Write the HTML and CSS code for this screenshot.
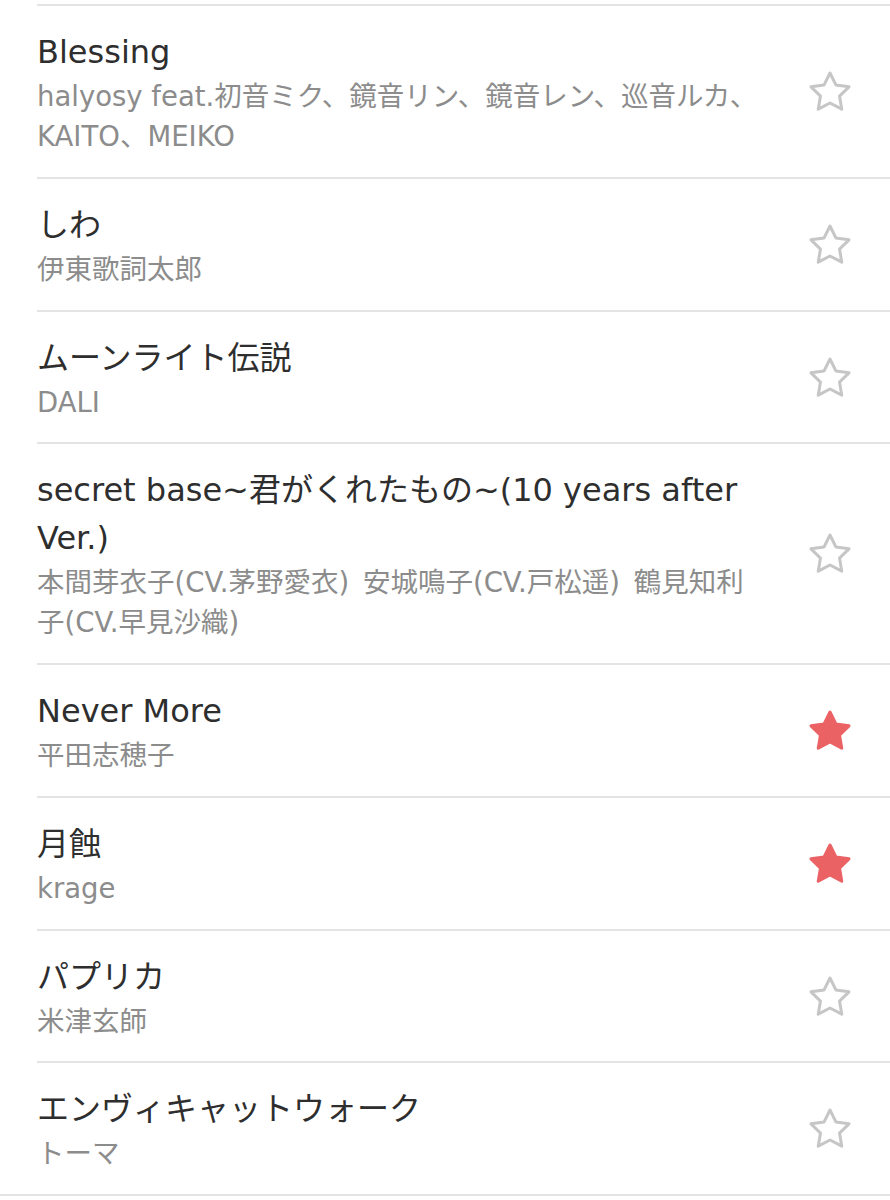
FILE: index.html
```html
<!DOCTYPE html>
<html lang="ja">
<head>
  <meta charset="UTF-8" />
  <meta name="viewport" content="width=device-width, initial-scale=1.0" />
  <title>お気に入り</title>
  <link rel="stylesheet" href="styles.css">
</head>
<body>
  <ul class="songs">
    <li class="song">
      <div class="info">
        <div class="title">Blessing</div>
        <div class="artist">halyosy feat.初音ミク、鏡音リン、鏡音レン、巡音ルカ、KAITO、MEIKO</div>
      </div>
      <div class="fav"><svg viewBox="0 0 48 48"><polygon points="24,5 29.88,16.91 43.02,18.82 33.51,28.09 35.76,41.18 24,35 12.24,41.18 14.49,28.09 4.98,18.82 18.12,16.91"/></svg></div>
    </li>
    <li class="song">
      <div class="info">
        <div class="title">しわ</div>
        <div class="artist">伊東歌詞太郎</div>
      </div>
      <div class="fav"><svg viewBox="0 0 48 48"><polygon points="24,5 29.88,16.91 43.02,18.82 33.51,28.09 35.76,41.18 24,35 12.24,41.18 14.49,28.09 4.98,18.82 18.12,16.91"/></svg></div>
    </li>
    <li class="song">
      <div class="info">
        <div class="title">ムーンライト伝説</div>
        <div class="artist">DALI</div>
      </div>
      <div class="fav"><svg viewBox="0 0 48 48"><polygon points="24,5 29.88,16.91 43.02,18.82 33.51,28.09 35.76,41.18 24,35 12.24,41.18 14.49,28.09 4.98,18.82 18.12,16.91"/></svg></div>
    </li>
    <li class="song">
      <div class="info">
        <div class="title">secret base~君がくれたもの~(10 years after Ver.)</div>
        <div class="artist">本間芽衣子(CV.茅野愛衣)&ensp;安城鳴子(CV.戸松遥)&ensp;鶴見知利子(CV.早見沙織)</div>
      </div>
      <div class="fav"><svg viewBox="0 0 48 48"><polygon points="24,5 29.88,16.91 43.02,18.82 33.51,28.09 35.76,41.18 24,35 12.24,41.18 14.49,28.09 4.98,18.82 18.12,16.91"/></svg></div>
    </li>
    <li class="song">
      <div class="info">
        <div class="title">Never More</div>
        <div class="artist">平田志穂子</div>
      </div>
      <div class="fav on"><svg viewBox="0 0 48 48"><polygon points="24,5 29.88,16.91 43.02,18.82 33.51,28.09 35.76,41.18 24,35 12.24,41.18 14.49,28.09 4.98,18.82 18.12,16.91"/></svg></div>
    </li>
    <li class="song">
      <div class="info">
        <div class="title">月蝕</div>
        <div class="artist">krage</div>
      </div>
      <div class="fav on"><svg viewBox="0 0 48 48"><polygon points="24,5 29.88,16.91 43.02,18.82 33.51,28.09 35.76,41.18 24,35 12.24,41.18 14.49,28.09 4.98,18.82 18.12,16.91"/></svg></div>
    </li>
    <li class="song">
      <div class="info">
        <div class="title">パプリカ</div>
        <div class="artist">米津玄師</div>
      </div>
      <div class="fav"><svg viewBox="0 0 48 48"><polygon points="24,5 29.88,16.91 43.02,18.82 33.51,28.09 35.76,41.18 24,35 12.24,41.18 14.49,28.09 4.98,18.82 18.12,16.91"/></svg></div>
    </li>
    <li class="song">
      <div class="info">
        <div class="title">エンヴィキャットウォーク</div>
        <div class="artist">トーマ</div>
      </div>
      <div class="fav"><svg viewBox="0 0 48 48"><polygon points="24,5 29.88,16.91 43.02,18.82 33.51,28.09 35.76,41.18 24,35 12.24,41.18 14.49,28.09 4.98,18.82 18.12,16.91"/></svg></div>
    </li>
  </ul>
</body>
</html>
```

FILE: styles.css
```css
body {
  margin: 0;
  background: #fff;
  font-family: "DejaVu Sans", "Noto Sans CJK JP", sans-serif;
}
.songs {
  list-style: none;
  margin: 4px 0 0;
  padding: 0;
  border-bottom: 2px solid #e4e4e4;
}
.song {
  display: flex;
  align-items: center;
  margin-left: 37px;
  padding: 22px 0 20.75px;
  border-top: 2px solid #e4e4e4;
}
.info {
  width: 728px;
}
.title {
  font-size: 32px;
  line-height: 48px;
  color: #2e2e2e;
}
.artist {
  font-size: 27.5px;
  line-height: 40px;
  color: #8c8c8c;
}
.fav {
  flex: 1;
  display: flex;
  justify-content: center;
  padding-left: 4px;
}
.fav svg {
  width: 48px;
  height: 48px;
}
.fav polygon {
  fill: none;
  stroke: #c6c6c6;
  stroke-width: 3;
  stroke-linejoin: round;
}
.fav.on polygon {
  fill: #eb6265;
  stroke: #eb6265;
}
```
